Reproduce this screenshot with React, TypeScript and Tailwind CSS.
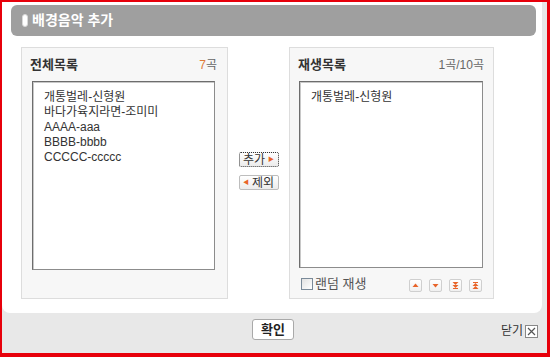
import type { ReactNode } from 'react';

const font = { fontFamily: '"Liberation Sans", "Noto Sans CJK KR", sans-serif' };

const allSongs = ['개통벌레-신형원', '바다가육지라면-조미미', 'AAAA-aaa', 'BBBB-bbbb', 'CCCCC-ccccc'];
const playSongs = ['개통벌레-신형원'];

function ListBox({ items, className }: { items: string[]; className: string }) {
  return (
    <div className={`bg-white border border-[#8c8c8c] border-t-[#6d6d6d] border-l-[#6d6d6d] shadow-[inset_1px_1px_0_#c8c8c8] pl-[11px] pt-[8px] ${className}`}>
      {items.map((s) => (
        <div key={s} className="text-[12px] leading-[15px] text-[#333]">{s}</div>
      ))}
    </div>
  );
}

function Arrow({ dir }: { dir: 'up' | 'down' | 'bottom' | 'top' }) {
  return (
    <div className="w-[13px] h-[13px] border border-[#cfcfcf] rounded-[2px] bg-gradient-to-b from-white to-[#f0f0f0] flex items-center justify-center">
      <svg width="7" height="7" viewBox="0 0 7 7">
        {dir === 'up' && <path d="M3.5 1.5 L6.5 5 L0.5 5 Z" fill="#e8642a" />}
        {dir === 'down' && <path d="M0.5 2 L6.5 2 L3.5 5.5 Z" fill="#e8642a" />}
        {dir === 'bottom' && (
          <>
            <path d="M0.5 0 L6.5 0 L3.5 3 Z" fill="#e8642a" />
            <path d="M0.5 3 L6.5 3 L3.5 6 Z" fill="#e8642a" />
            <rect x="1" y="6" width="5" height="1" fill="#e8642a" />
          </>
        )}
        {dir === 'top' && (
          <>
            <rect x="1" y="0" width="5" height="1" fill="#e8642a" />
            <path d="M3.5 1 L6.5 4 L0.5 4 Z" fill="#e8642a" />
            <path d="M3.5 4 L6.5 7 L0.5 7 Z" fill="#e8642a" />
          </>
        )}
      </svg>
    </div>
  );
}

function SmallBtn({ children, focus }: { children: ReactNode; focus?: boolean }) {
  return (
    <div
      className={`h-[15px] w-[40px] flex items-center justify-center gap-[3px] text-[12px] text-[#333] bg-gradient-to-b from-white to-[#ececec] rounded-[2px] ${
        focus ? 'border border-dotted border-[#333]' : 'border border-[#bdbdbd]'
      }`}
    >
      {children}
    </div>
  );
}

export default function App() {
  return (
    <div
      style={font}
      className="w-[550px] h-[357px] bg-[#e8e8e8] border-red-600 border-l-2 border-t-2 border-r-[3px] border-b-4 flex flex-col"
    >
      {/* main white panel */}
      <div className="bg-white mr-[5px] h-[311px] rounded-b-[8px] flex flex-col">
        <div className="mx-[9px] mt-[3px] mr-[6px] h-[31px] rounded-[6px] bg-[#9f9f9f] flex items-center pl-[11px] gap-[4px]">
          <div className="w-[6px] h-[13px] rounded-full bg-white border border-[#d8d8d8]" />
          <span className="text-white font-bold text-[14px]">배경음악 추가</span>
        </div>

        <div className="flex mt-[11px] ml-[19px]">
          {/* 전체목록 */}
          <div className="w-[207px] h-[252px] bg-[#f7f7f7] border border-[#dddddd] flex flex-col">
            <div className="flex justify-between items-center h-[33px] pl-[8px] pr-[10px] pt-[1px]">
              <span className="font-bold text-[13px] text-[#333]">전체목록</span>
              <span className="text-[12px] text-[#666]">
                <span className="text-[#e07b39]">7</span>곡
              </span>
            </div>
            <ListBox items={allSongs} className="ml-[10px] w-[183px] h-[189px]" />
          </div>

          {/* move buttons */}
          <div className="w-[61px] flex flex-col items-center pt-[105px] gap-[8px]">
            <SmallBtn focus>
              <span>추가</span>
              <span className="text-[#e8642a] text-[6px]">▶</span>
            </SmallBtn>
            <SmallBtn>
              <span className="text-[#e8642a] text-[6px]">◀</span>
              <span>제외</span>
            </SmallBtn>
          </div>

          {/* 재생목록 */}
          <div className="w-[205px] h-[252px] bg-[#f7f7f7] border border-[#dddddd] flex flex-col">
            <div className="flex justify-between items-center h-[33px] pl-[8px] pr-[9px] pt-[1px]">
              <span className="font-bold text-[13px] text-[#333]">재생목록</span>
              <span className="text-[12px] text-[#666]">1곡/10곡</span>
            </div>
            <ListBox items={playSongs} className="ml-[9px] w-[184px] h-[187px]" />
            <div className="flex items-center ml-[11px] mr-[11px] mt-[6px]">
              <div className="w-[12px] h-[12px] border border-[#7a8a99] bg-gradient-to-br from-[#e2e2e2] to-white" />
              <span className="ml-[2px] text-[13px] text-[#555]">랜덤 재생</span>
              <div className="ml-auto flex gap-[7px] mt-[3px]">
                <Arrow dir="up" />
                <Arrow dir="down" />
                <Arrow dir="bottom" />
                <Arrow dir="top" />
              </div>
            </div>
          </div>
        </div>
      </div>

      {/* footer */}
      <div className="flex-1 flex items-start">
        <div className="ml-[250px] mt-[6px] h-[21px] w-[42px] bg-white border border-[#a9a9a9] rounded-[3px] flex items-center justify-center font-bold text-[13px] text-[#222]">
          확인
        </div>
        <div className="ml-auto mr-[9px] mt-[9px] flex items-center gap-[2px] text-[12px] text-[#333]">
          <span>닫기</span>
          <div className="w-[13px] h-[13px] border border-[#888] bg-white flex items-center justify-center">
            <svg width="9" height="9" viewBox="0 0 9 9">
              <path d="M1 1 L8 8 M8 1 L1 8" stroke="#555" strokeWidth="1.2" />
            </svg>
          </div>
        </div>
      </div>
    </div>
  );
}
